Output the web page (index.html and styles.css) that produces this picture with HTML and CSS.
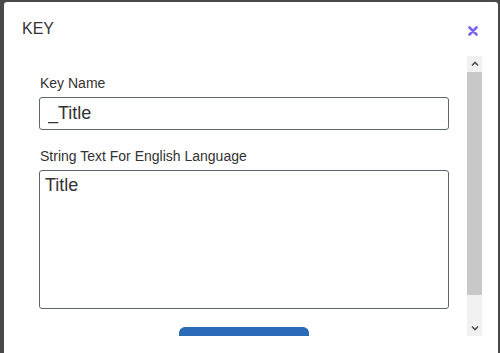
FILE: index.html
```html
<!DOCTYPE html>
<html lang="en">

<head>
    <meta charset="UTF-8">
    <meta name="viewport" content="width=device-width, initial-scale=1.0">
    <title>Key</title>
    <link rel="stylesheet" href="styles.css">
</head>

<body>
<div class="modal">
    <div class="modal-header">
        <div class="modal-title">KEY</div>
        <button class="close-btn" aria-label="Close">
            <svg width="10" height="10" viewBox="0 0 10 10">
                <path d="M1.5 1.5 L8.5 8.5 M8.5 1.5 L1.5 8.5" stroke="#7866ee" stroke-width="2.6" stroke-linecap="round"/>
            </svg>
        </button>
    </div>
    <div class="modal-body">
        <div class="body-content">
            <div class="field">
                <label for="key-name">Key Name</label>
                <input id="key-name" type="text" value="_Title">
            </div>
            <div class="field">
                <label for="key-text">String Text For English Language</label>
                <textarea id="key-text">Title</textarea>
            </div>
            <div class="actions">
                <button class="save-btn">Save</button>
            </div>
        </div>
        <!-- scrollbar drawn by hand, the headless one is hidden -->
        <div class="scrollbar">
            <div class="scroll-arrow">
                <svg width="8" height="6" viewBox="0 0 8 6"><path d="M1 4.5 L4 1.5 L7 4.5" fill="none" stroke="#505050" stroke-width="1.6"/></svg>
            </div>
            <div class="scroll-track">
                <div class="scroll-thumb"></div>
            </div>
            <div class="scroll-arrow">
                <svg width="8" height="6" viewBox="0 0 8 6"><path d="M1 1.5 L4 4.5 L7 1.5" fill="none" stroke="#505050" stroke-width="1.6"/></svg>
            </div>
        </div>
    </div>
</div>
</body>

</html>
```
FILE: styles.css
```css
html, body {
    height: 100%;
}

body {
    margin: 0;
    background-color: #4a4a4a;
    font-family: "Liberation Sans", Arial, Helvetica, sans-serif;
    color: #333;
    overflow: hidden;
}

.modal {
    margin: 2px 2px 0 4px;
    height: calc(100% - 2px);
    background-color: #fff;
    border-radius: 3px 3px 0 0;
}

.modal-header {
    display: flex;
    justify-content: space-between;
    align-items: center;
    height: 54px;
    padding: 0 20px 0 18px;
}

.modal-title {
    font-size: 16px;
}

.close-btn {
    display: flex;
    padding: 0;
    margin-top: 3px;
    border: none;
    background: none;
}

.modal-body {
    display: flex;
    height: 280px;
    margin: 0 16px 0 18px;
}

.body-content {
    flex: 1;
    padding: 19px 18px 7px 17px;
    overflow: hidden;
}

.scrollbar {
    display: flex;
    flex-direction: column;
    width: 15px;
    background-color: #f1f1f1;
}

.scroll-arrow {
    display: flex;
    justify-content: center;
    align-items: center;
    height: 16px;
}

.scroll-track {
    flex: 1;
}

.scroll-thumb {
    height: 223px;
    background-color: #c8c8c8;
}

.field {
    display: flex;
    flex-direction: column;
    margin-bottom: 18px;
}

label {
    font-size: 14px;
    line-height: 16px;
    margin: 0 0 6px 1px;
}

input,
textarea {
    box-sizing: border-box;
    width: 100%;
    border: 1px solid #5d6670;
    border-radius: 3px;
    font-family: "Liberation Sans", Arial, Helvetica, sans-serif;
    font-size: 18px;
    color: #333;
    outline: none;
}

input {
    height: 33px;
    padding: 0 8px;
}

textarea {
    height: 139px;
    padding: 4px 5px;
    resize: none;
}

.actions {
    display: flex;
    justify-content: center;
}

.save-btn {
    width: 130px;
    height: 38px;
    border: none;
    border-radius: 6px;
    background-color: #2b6cb8;
    color: #fff;
    font-size: 14px;
}
```
